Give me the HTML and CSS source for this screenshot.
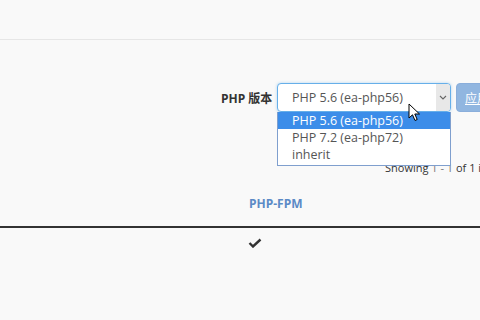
FILE: index.html
```html
<!DOCTYPE html>
<html lang="zh">
<head>
<meta charset="utf-8">
<link rel="stylesheet" href="styles.css">
</head>
<body>
<div class="header"></div>
<div class="toolbar">
  <span class="label">PHP 版本</span>
  <div class="select-wrap">
    <div class="select">
      <span class="select-text">PHP 5.6 (ea-php56)</span>
      <span class="arrow"><svg width="8" height="5" viewBox="0 0 8 5"><path d="M1 1 L4 4 L7 1" fill="none" stroke="#666" stroke-width="1.1"/></svg></span>
    </div>
    <ul class="options">
      <li class="opt active">PHP 5.6 (ea-php56)</li>
      <li class="opt">PHP 7.2 (ea-php72)</li>
      <li class="opt">inherit</li>
    </ul>
    <svg class="cursor" width="13" height="19" viewBox="0 0 13 19"><path d="M1 1 L1 15 L4.5 11.8 L7 17.5 L9.2 16.5 L6.8 11 L11.5 11 Z" fill="#fff" stroke="#000" stroke-width="1" stroke-linejoin="round"/></svg>
  </div>
  <button class="apply">应用</button>
</div>
<div class="showing">Showing <span class="num">1 - 1</span> of 1 items</div>
<table class="grid">
  <thead>
    <tr><th class="spacer"></th><th class="col">PHP-FPM</th><th class="rest"></th></tr>
  </thead>
  <tbody>
    <tr><td class="spacer"></td><td class="col"><svg width="14" height="10" viewBox="0 0 14 10"><path d="M1.5 5 L5 8.5 L12.5 1.5" fill="none" stroke="#333" stroke-width="2.4"/></svg></td><td class="rest"></td></tr>
  </tbody>
</table>
</body>
</html>
```
FILE: styles.css
```css
html, body {
  margin: 0;
  padding: 0;
  background: #f9f9f9;
  font-family: "Open Sans", "Noto Sans CJK SC", sans-serif;
  color: #333;
  overflow: hidden;
  width: 480px;
  height: 320px;
}
.header {
  height: 39px;
  border-bottom: 1px solid #e6e6e6;
}
.toolbar {
  margin-top: 43px;
  height: 29px;
  display: flex;
  align-items: center;
  padding-left: 221px;
  width: 340px;
}
.label {
  font-weight: 700;
  font-size: 12px;
  width: 52px;
  margin-right: 4px;
  white-space: nowrap;
}
.select-wrap {
  position: relative;
  width: 174px;
  height: 29px;
}
.select {
  box-sizing: border-box;
  width: 174px;
  height: 29px;
  border: 1px solid #66afe9;
  border-radius: 4px;
  background: #fff;
  box-shadow: 0 0 3px rgba(102, 175, 233, 0.5);
  display: flex;
  align-items: center;
  justify-content: space-between;
}
.select-text {
  padding-left: 14px;
  font-size: 12.5px;
  color: #555;
}
.arrow {
  width: 14px;
  height: 27px;
  background: #e8e8e8;
  border-radius: 0 3px 3px 0;
  display: flex;
  align-items: center;
  justify-content: center;
}
.options {
  position: absolute;
  top: 29px;
  left: 0;
  margin: 0;
  padding: 0 0 2px 0;
  list-style: none;
  width: 174px;
  box-sizing: border-box;
  background: #fff;
  border: 1px solid #7f9fce;
  border-top: none;
}
.opt {
  height: 17px;
  line-height: 17px;
  padding-left: 14px;
  font-size: 12.5px;
  color: #555;
}
.opt.active {
  background: #3c8de9;
  color: #fff;
}
.cursor {
  position: absolute;
  left: 131px;
  top: 20px;
}
.apply {
  margin-left: 5px;
  height: 29px;
  width: 40px;
  flex: none;
  border: 1px solid #8aaedb;
  border-radius: 4px;
  background: #91b6e0;
  color: #fff;
  font-family: "Open Sans", "Noto Sans CJK SC", sans-serif;
  font-size: 12px;
  text-align: left;
  padding: 0 0 0 8px;
  text-decoration: underline;
}
.showing {
  margin-top: 49px;
  padding-left: 385px;
  font-size: 11px;
  line-height: 14px;
  white-space: nowrap;
  color: #333;
}
.num {
  color: #777;
}
.grid {
  margin-top: 12px;
  width: 480px;
  border-collapse: collapse;
}
.grid th {
  padding: 8px 0 13px 0;
  line-height: 18px;
  font-size: 12px;
  font-weight: 700;
  color: #5b8ac6;
  text-align: left;
  border-bottom: 2px solid #333;
}
.grid td {
  padding: 10px 0 0 0;
  line-height: 16px;
  vertical-align: top;
}
.spacer {
  width: 248px;
}
.grid th.col {
  width: 70px;
  padding-left: 1px;
}
.grid td.col svg {
  display: block;
}
```
